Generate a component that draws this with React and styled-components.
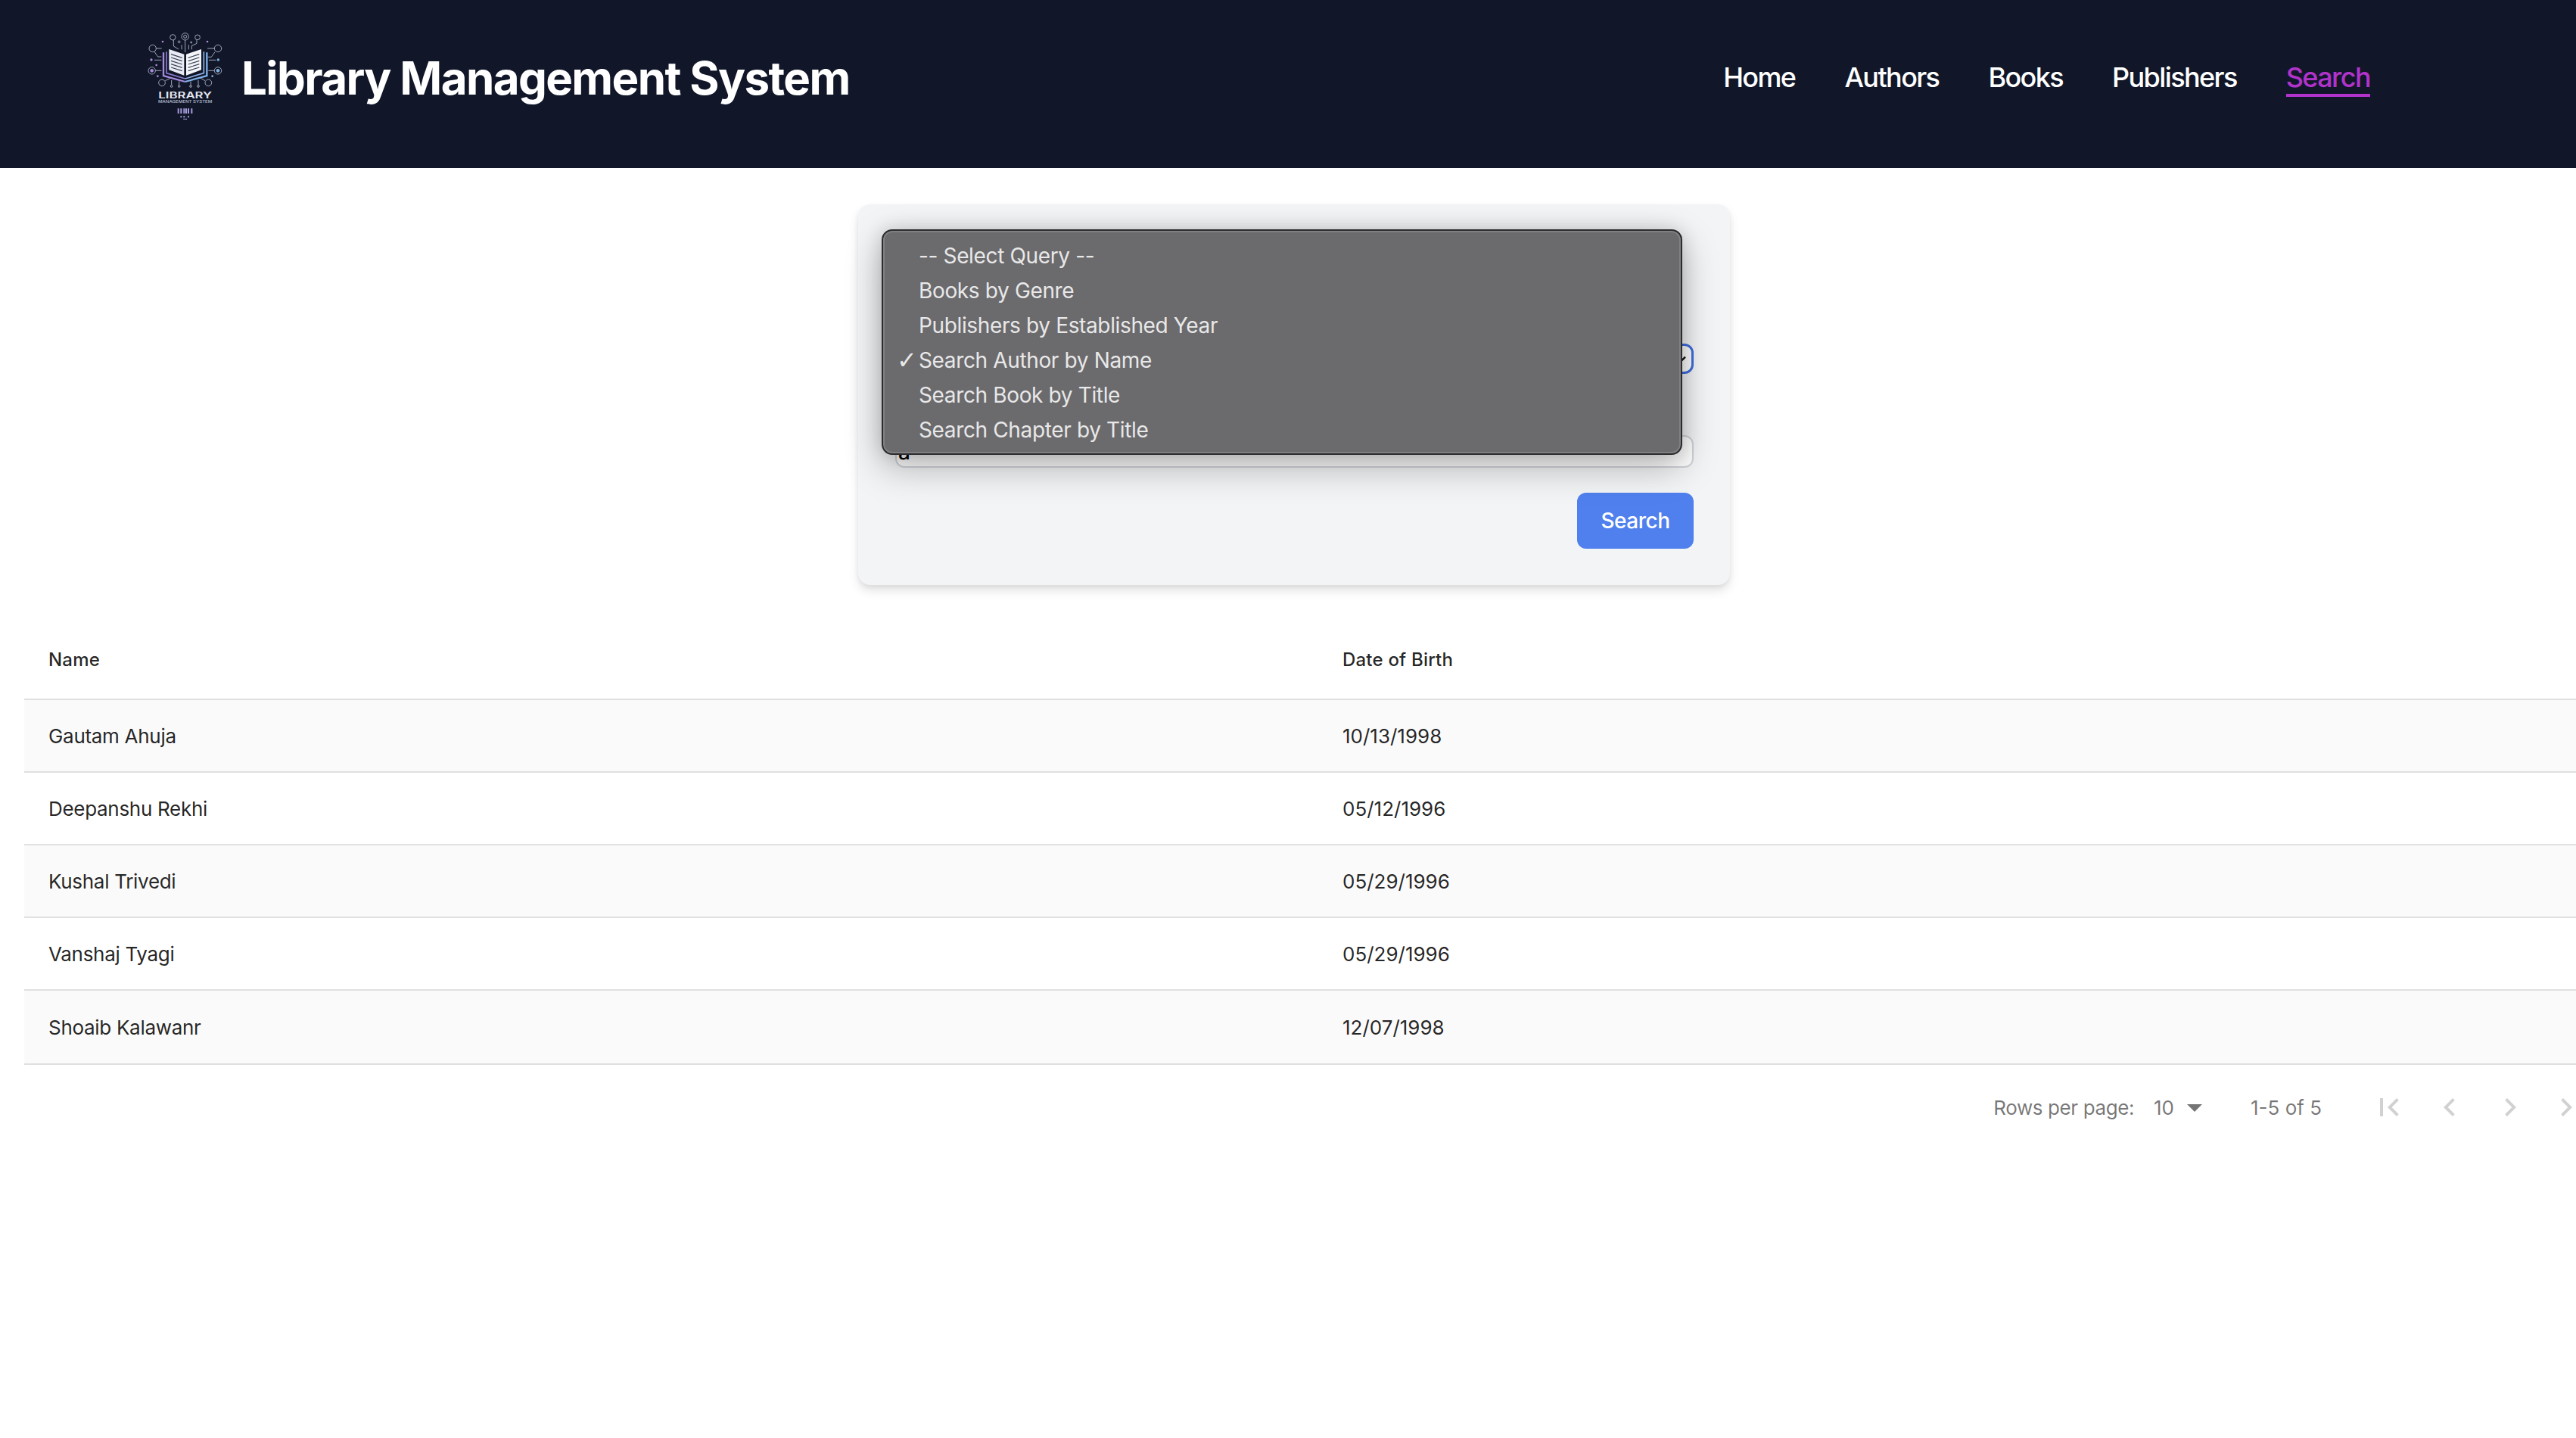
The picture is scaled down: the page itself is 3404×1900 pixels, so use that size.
import React from 'react';
import styled, { createGlobalStyle } from 'styled-components';

const GlobalStyle = createGlobalStyle`
  html, body {
    margin: 0;
    background: #fff;
    overflow: hidden;
    height: 100%;
  }
  * {
    box-sizing: border-box;
  }
  body {
    font-family: Inter, "Liberation Sans", sans-serif;
    -webkit-font-smoothing: antialiased;
  }
`;

const navItems = ['Home', 'Authors', 'Books', 'Publishers', 'Search'];

const queryOptions = [
  '-- Select Query --',
  'Books by Genre',
  'Publishers by Established Year',
  'Search Author by Name',
  'Search Book by Title',
  'Search Chapter by Title',
];

const authors = [
  { name: 'Gautam Ahuja', dob: '10/13/1998' },
  { name: 'Deepanshu Rekhi', dob: '05/12/1996' },
  { name: 'Kushal Trivedi', dob: '05/29/1996' },
  { name: 'Vanshaj Tyagi', dob: '05/29/1996' },
  { name: 'Shoaib Kalawanr', dob: '12/07/1998' },
];

const Logo = () => (
  <LogoSvg viewBox="90 57 330 384">
    <g fill="none" stroke="#b9c0d4" strokeWidth="2.5">
      <circle cx="125" cy="132" r="14" />
      <circle cx="384" cy="132" r="14" />
      <circle cx="122" cy="220" r="14" />
      <circle cx="384" cy="220" r="14" />
      <circle cx="162" cy="268" r="13" />
      <circle cx="346" cy="268" r="13" />
      <circle cx="205" cy="88" r="11" />
      <circle cx="254" cy="85" r="14" />
      <circle cx="303" cy="88" r="10" />
      <circle cx="254" cy="85" r="6" />
      <circle cx="230" cy="106" r="4" />
      <circle cx="278" cy="108" r="3" />
      <circle cx="200" cy="282" r="4" />
      <circle cx="230" cy="282" r="4" />
      <circle cx="276" cy="282" r="4" />
      <circle cx="306" cy="282" r="4" />
      <path d="M139 132h22M132 145l14 20h14M132 178h28M136 220h24M175 260l20-10M200 278v-20M230 278v-16M276 278v-16M306 278v-20M333 260l-20-12" />
      <path d="M370 132h-28M372 146l-14 20h-14M376 178h-28M370 220h-24M208 99v24l20 12M240 118v18M254 99v48M268 118v18M300 98v14l-20 10v14" />
    </g>
    <g fill="#a78bd8">
      <circle cx="165" cy="105" r="4" />
      <circle cx="342" cy="105" r="4" />
      <circle cx="120" cy="177" r="5" />
      <circle cx="145" cy="242" r="4" />
      <circle cx="122" cy="220" r="7" />
      <circle cx="140" cy="198" r="4" />
    </g>
    <g fill="#7fb2e0">
      <circle cx="385" cy="177" r="5" />
      <circle cx="362" cy="242" r="4" />
      <circle cx="384" cy="220" r="7" />
    </g>
    <path d="M168 148v92l86 24" fill="none" stroke="#a78be0" strokeWidth="7" />
    <path d="M340 148v92l-86 24" fill="none" stroke="#7fb2ea" strokeWidth="7" />
    <path d="M180 145v85l74 22" fill="none" stroke="#8d7bd0" strokeWidth="5" />
    <path d="M328 145v85l-74 22" fill="none" stroke="#8fb0e8" strokeWidth="5" />
    <path d="M190 135l60 20v84l-60-22z" fill="#e8ebf3" />
    <path d="M258 155l60-20v82l-60 22z" fill="#f4f5f9" />
    <path
      d="M198 155l44 14M198 168l44 14M198 181l44 14M198 194l44 14M198 207l44 14M266 169l44-14M266 182l44-14M266 195l44-14M266 208l44-14M266 221l44-14"
      fill="none"
      stroke="#3a4154"
      strokeWidth="3.5"
    />
    <LogoTitle x="148" y="329" textLength="212" lengthAdjust="spacingAndGlyphs">
      LIBRARY
    </LogoTitle>
    <LogoSub x="147" y="349" textLength="214" lengthAdjust="spacingAndGlyphs">
      MANAGEMENT SYSTEM
    </LogoSub>
    <path
      d="M227 370v20M238 370v20M250 370v20M258 370v20M267 370v20M280 370v20M238 400v6M250 400v6M267 400v6M258 410v4M250 410v4"
      fill="none"
      stroke="#a89bdc"
      strokeWidth="6"
    />
  </LogoSvg>
);

const PageIcon = ({ d }) => (
  <svg viewBox="0 0 24 24" width="48" height="48" fill="currentColor">
    <path d={d} />
  </svg>
);

const pageButtons = [
  'M18.41 16.59L13.82 12l4.59-4.59L17 6l-6 6 6 6zM6 6h2v12H6z',
  'M15.41 7.41L14 6l-6 6 6 6 1.41-1.41L10.83 12z',
  'M10 6L8.59 7.41 13.17 12l-4.58 4.59L10 18l6-6z',
  'M5.59 7.41L10.18 12l-4.59 4.59L7 18l6-6-6-6zM16 6h2v12h-2z',
];

const App = () => {
  return (
    <>
      <GlobalStyle />
      <Header>
        <Brand>
          <Logo />
          <Title>Library Management System</Title>
        </Brand>
        <Nav>
          {navItems.map(item => (
            <NavLink key={item} active={item === 'Search' ? 1 : 0}>
              {item}
            </NavLink>
          ))}
        </Nav>
      </Header>

      <Main>
        <Card>
          <SelectBox>
            <svg viewBox="0 0 20 20" width="24" height="24" fill="none" stroke="#111" strokeWidth="2">
              <path d="M5 8l5 5 5-5" />
            </svg>
          </SelectBox>
          <TextInput value="a" readOnly />
          <ButtonRow>
            <SearchButton>Search</SearchButton>
          </ButtonRow>
          <Popup>
            {queryOptions.map(option => (
              <PopupItem key={option}>
                <Check>{option === 'Search Author by Name' ? '✓' : ''}</Check>
                {option}
              </PopupItem>
            ))}
          </Popup>
        </Card>
      </Main>

      <TableWrap>
        <HeadRow>
          <HeadCell>Name</HeadCell>
          <HeadCell>Date of Birth</HeadCell>
        </HeadRow>
        {authors.map((author, i) => (
          <Row key={author.name} striped={i % 2 === 0 ? 1 : 0} last={i === authors.length - 1 ? 1 : 0}>
            <NameCell>{author.name}</NameCell>
            <Cell>{author.dob}</Cell>
          </Row>
        ))}
        <Footer>
          <RowsLabel>Rows per page:</RowsLabel>
          <RowsValue>10</RowsValue>
          <svg viewBox="0 0 24 24" width="48" height="48" fill="rgba(0,0,0,0.54)">
            <path d="M7 10l5 5 5-5z" />
          </svg>
          <Range>1-5 of 5</Range>
          {pageButtons.map(d => (
            <PageButton key={d}>
              <PageIcon d={d} />
            </PageButton>
          ))}
        </Footer>
      </TableWrap>
    </>
  );
};

const Header = styled.header`
  height: 222px;
  padding: 0 272px 16px 190px;
  background: #111729;
  display: flex;
  align-items: center;
  justify-content: space-between;
`;

const Brand = styled.div`
  display: flex;
  align-items: center;
  gap: 19px;
`;

const LogoSvg = styled.svg`
  width: 110px;
  height: 128px;
  display: block;
`;

const LogoTitle = styled.text`
  font-family: Inter, sans-serif;
  font-size: 36px;
  font-weight: 600;
  fill: #e6e8f2;
`;

const LogoSub = styled.text`
  font-family: Inter, sans-serif;
  font-size: 13px;
  font-weight: 500;
  fill: #b9bfd4;
`;

const Title = styled.h1`
  margin: 0;
  font-size: 60px;
  font-weight: 700;
  letter-spacing: -1.6px;
  color: #fff;
  white-space: nowrap;
`;

const Nav = styled.nav`
  display: flex;
  gap: 65px;
  padding-top: 2px;
`;

const NavLink = styled.a`
  font-size: 36px;
  font-weight: 500;
  letter-spacing: -1.6px;
  line-height: 44px;
  color: ${props => (props.active ? '#b233cc' : '#fff')};
  border-bottom: 4px solid ${props => (props.active ? '#b233cc' : 'transparent')};
`;

const Main = styled.main`
  width: 3420px;
  padding-top: 48px;
`;

const Card = styled.section`
  position: relative;
  width: 1152px;
  height: 503px;
  margin: 0 auto;
  padding: 184px 48px 48px 49px;
  background: #f3f4f6;
  border-radius: 16px;
  box-shadow: 0 8px 14px rgba(0, 0, 0, 0.1), 0 3px 6px rgba(0, 0, 0, 0.06);
  display: flex;
  flex-direction: column;
`;

const SelectBox = styled.div`
  height: 40px;
  background: #fff;
  border: 3px solid #3f6fe0;
  border-radius: 12px;
  display: flex;
  align-items: center;
  justify-content: flex-end;
  padding-right: 2px;
`;

const TextInput = styled.input`
  margin-top: 81px;
  width: 100%;
  height: 43px;
  padding: 0 2px;
  font-family: Inter, sans-serif;
  font-size: 28px;
  font-weight: 500;
  color: #000;
  background: #fff;
  border: 2px solid #d1d3da;
  border-radius: 12px;
  outline: none;
`;

const ButtonRow = styled.div`
  margin-top: 33px;
  display: flex;
  justify-content: flex-end;
`;

const SearchButton = styled.button`
  width: 154px;
  height: 74px;
  font-family: Inter, sans-serif;
  font-size: 28px;
  font-weight: 500;
  letter-spacing: -0.5px;
  color: #fff;
  background: #4f80ee;
  border: none;
  border-radius: 12px;
`;

const Popup = styled.div`
  position: absolute;
  top: 33px;
  left: 31px;
  width: 1058px;
  height: 298px;
  padding: 10px 0;
  background: #6b6a6d;
  border: 2px solid #2c2c2e;
  border-radius: 14px;
  box-shadow: inset 0 0 0 2px #807f82, 0 16px 48px rgba(0, 0, 0, 0.28), 0 0 24px rgba(0, 0, 0, 0.14);
`;

const PopupItem = styled.div`
  display: flex;
  align-items: center;
  height: 46px;
  font-size: 28px;
  letter-spacing: -0.36px;
  color: #e8e8e8;
  white-space: nowrap;
`;

const Check = styled.span`
  width: 47px;
  padding-left: 18px;
  font-size: 32px;
  font-family: "DejaVu Sans", sans-serif;
`;

const TableWrap = styled.section`
  width: 3420px;
  margin: 47px 0 0 32px;
  color: rgba(0, 0, 0, 0.87);
`;

const HeadRow = styled.div`
  display: grid;
  grid-template-columns: 1710px 1710px;
  align-items: center;
  height: 105px;
  border-bottom: 2px solid #e0e0e0;
`;

const HeadCell = styled.div`
  padding-left: 32px;
  font-size: 24px;
  font-weight: 500;
  letter-spacing: 0.2px;
`;

const Row = styled.div`
  display: grid;
  grid-template-columns: 1710px 1710px;
  align-items: center;
  height: 96px;
  background: ${props => (props.striped ? '#fafafa' : '#fff')};
  border-bottom: ${props => (props.last ? 'none' : '2px solid #e0e0e0')};
`;

const Cell = styled.div`
  padding-left: 32px;
  font-size: 26px;
`;

const NameCell = styled(Cell)`
  letter-spacing: -0.3px;
`;

const Footer = styled.footer`
  display: flex;
  align-items: center;
  justify-content: flex-end;
  height: 114px;
  padding-right: 15px;
  border-top: 2px solid #e0e0e0;
  color: rgba(0, 0, 0, 0.54);
  font-size: 26px;
`;

const RowsLabel = styled.span`
  margin-right: 26px;
  letter-spacing: -0.4px;
`;

const RowsValue = styled.span`
  margin-right: 3px;
`;

const Range = styled.span`
  margin: 0 49px 0 50px;
`;

const PageButton = styled.div`
  width: 80px;
  height: 80px;
  display: flex;
  align-items: center;
  justify-content: center;
  color: rgba(0, 0, 0, 0.18);
`;

export default App;
